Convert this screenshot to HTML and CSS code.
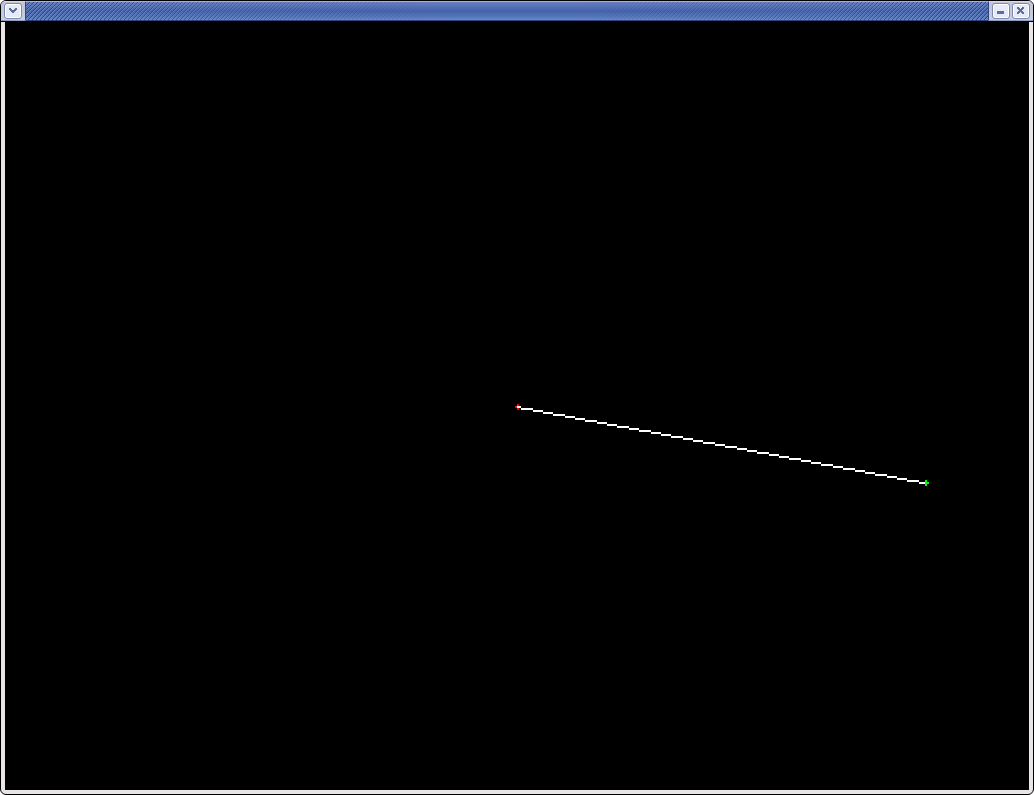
FILE: index.html
```
<!DOCTYPE html>
<html lang="en">
<head>
    <meta charset="utf-8">
    <title>Line</title>
    <link rel="stylesheet" href="styles.css">
</head>
<body>
    <div class="window">
        <div class="titlebar">
            <div class="buttons">
                <button class="btn" type="button" aria-label="Window menu">
                    <svg width="8" height="8" shape-rendering="crispEdges"><path d="M0 1h2v1h1v1h2v-1h1v-1h2v2h-1v1h-1v1h-1v1h-2v-1h-1v-1h-1v-1h-1z"/></svg>
                </button>
            </div>
            <div class="caption">
                <svg class="hatch" width="100%" height="100%" shape-rendering="crispEdges">
                    <defs>
                        <pattern id="stripes" width="4" height="4" patternUnits="userSpaceOnUse">
                            <path fill="#2b4583" d="M3 0h1v1h-1zM2 1h1v1h-1zM1 2h1v1h-1zM0 3h1v1h-1z"/>
                            <path fill="#6c86c4" d="M0 0h1v1h-1zM3 1h1v1h-1zM2 2h1v1h-1zM1 3h1v1h-1z"/>
                        </pattern>
                    </defs>
                    <rect width="100%" height="100%" fill="url(#stripes)"/>
                </svg>
            </div>
            <div class="buttons buttons-right">
                <button class="btn" type="button" aria-label="Minimize">
                    <svg width="8" height="8" shape-rendering="crispEdges"><path d="M0 4h7v3h-7z"/></svg>
                </button>
                <button class="btn" type="button" aria-label="Close">
                    <svg width="8" height="8" shape-rendering="crispEdges"><path d="M0 0h2v1h1v1h1v-1h1v-1h2v2h-1v1h-1v1h1v1h1v2h-2v-1h-1v-1h-1v1h-1v1h-2v-2h1v-1h1v-1h-1v-1h-1z"/></svg>
                </button>
            </div>
        </div>
        <canvas id="view" class="view" width="512" height="384"></canvas>
    </div>
    <script src="script.js"></script>
</body>
</html>
```
FILE: styles.css
```
body {
    margin: 0;
    background-color: #fff;
}

.window {
    overflow: hidden;
    border: 1px solid #000;
    border-radius: 6px;
    background-color: #e9e5e8;
}

.titlebar {
    display: flex;
    height: 20px;
    border-bottom: 1px solid #000;
}

.buttons {
    display: flex;
    box-sizing: border-box;
    gap: 2px;
    padding: 1px 3px 0 3px;
    border-top: 1px solid #d8daea;
    border-right: 1px solid #2c4580;
    border-bottom: 1px solid #8e9cc4;
    background-image: linear-gradient(#c3c3d8, #c4cfe6);
}

.buttons-right {
    border-right: none;
    border-left: 1px solid #2c4580;
}

.btn {
    display: flex;
    align-items: center;
    justify-content: center;
    box-sizing: border-box;
    width: 18px;
    height: 16px;
    padding: 0;
    border: 1px solid #7f89aa;
    border-radius: 3px;
    background-color: #e6e9f6;
    box-shadow: inset 0 0 0 1px #fff;
}

.btn path {
    fill: #5f6e98;
}

.caption {
    flex: 1;
    box-sizing: border-box;
    border-top: 1px solid #a9b0d8;
    border-bottom: 1px solid #2c4580;
    background-image: linear-gradient(#6c7fc0, #4263ab 50%, #5878bb 85%, #6c8cc8);
}

/* the stripes fade out towards the middle of the title bar */
.hatch {
    display: block;
    -webkit-mask-image: linear-gradient(to right, #000, transparent 45%, transparent 55%, #000);
    mask-image: linear-gradient(to right, #000, transparent 45%, transparent 55%, #000);
}

.view {
    display: block;
    box-sizing: border-box;
    width: 100%;
    padding: 0 4px 4px 4px;
    image-rendering: pixelated;
}
```
FILE: script.js
```
var canvas = document.getElementById('view');
var ctx = canvas.getContext('2d');

var from = { x: 256, y: 192 };
var to = { x: 460, y: 230 };

function plot(x, y, color) {
    ctx.fillStyle = color;
    ctx.fillRect(x, y, 1, 1);
}

function drawCross(p, color) {
    plot(p.x, p.y, color);
    plot(p.x - 1, p.y, color);
    plot(p.x + 1, p.y, color);
    plot(p.x, p.y - 1, color);
    plot(p.x, p.y + 1, color);
}

function drawLine(a, b, color) {
    var slope = (b.y - a.y) / (b.x - a.x);
    for (var x = a.x; x < b.x; x++) {
        // round on the next column, so the first step comes early
        plot(x, a.y + Math.round((x + 1 - a.x) * slope), color);
    }
}

ctx.fillStyle = '#000';
ctx.fillRect(0, 0, canvas.width, canvas.height);
drawCross(from, '#f00');
drawCross(to, '#0f0');
drawLine(from, to, '#fff');
```
